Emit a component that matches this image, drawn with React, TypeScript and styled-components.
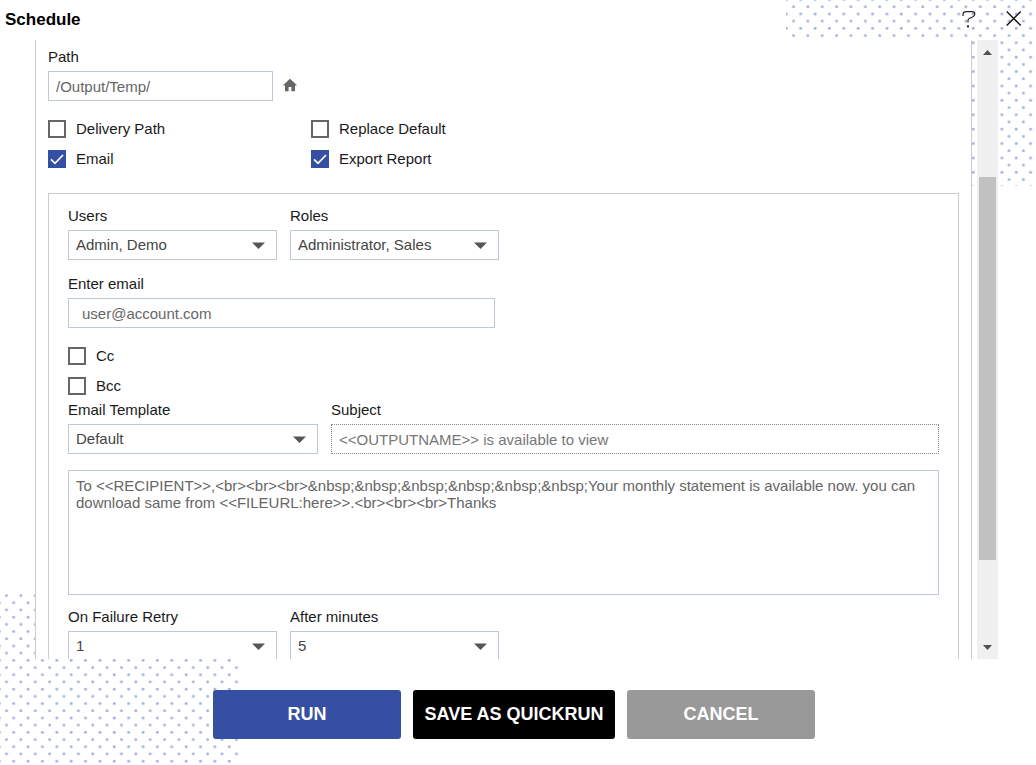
import React, { useId } from "react";
import styled, { createGlobalStyle } from "styled-components";

const GlobalStyle = createGlobalStyle`
  *, *::before, *::after { box-sizing: border-box; }
  body { margin: 0; background: #fff; }
  body, button, input, select, textarea {
    font-family: "Liberation Sans", Arial, Helvetica, sans-serif;
    font-size: 15px;
  }
`;

const Dialog = styled.div`
  position: relative;
  display: flex;
  flex-direction: column;
  height: 100vh;
  overflow: hidden;
  color: #1a1a1a;
`;

const Dots = styled.svg<{ $corner: "top" | "bottom" }>`
  position: absolute;
  z-index: -1;
  ${(p) => (p.$corner === "top" ? "top: 0; right: 0;" : "bottom: 0; left: 0;")}
`;

const Header = styled.header`
  display: flex;
  flex: none;
  align-items: center;
  justify-content: space-between;
  height: 40px;
  padding: 0 14px 0 5px;
`;

const Title = styled.h1`
  margin: 0;
  font-size: 17px;
  line-height: 20px;
  color: #000;
`;

const HeaderActions = styled.div`
  display: flex;
  gap: 28px;
`;

const IconButton = styled.button`
  display: flex;
  padding: 0;
  border: 0;
  background: none;
  cursor: pointer;
`;

const Body = styled.main`
  display: flex;
  flex: 1;
  gap: 5px;
  min-height: 0;
  padding: 0 38px 0 35px;
`;

const Panel = styled.div`
  flex: 1;
  min-width: 0;
  overflow: hidden;
  padding: 8px 12px 0;
  border: solid #ccc;
  border-width: 0 1px;
  background: #fff;
`;

const ScrollTrack = styled.div`
  display: flex;
  flex-direction: column;
  align-items: center;
  width: 21px;
  background: #f0f0f0;
`;

const ScrollArrow = styled(IconButton)`
  flex: none;
  align-items: center;
  justify-content: center;
  width: 21px;
  height: 24px;
`;

const ScrollSpace = styled.div<{ $grow: number }>`
  flex: ${(p) => p.$grow} 0 0;
`;

const ScrollThumb = styled(ScrollSpace)`
  width: 17px;
  background: #c1c1c1;
`;

const Row = styled.div<{ $top?: number }>`
  display: flex;
  align-items: flex-end;
  gap: 13px;
  margin-top: ${(p) => p.$top ?? 0}px;
`;

const Field = styled.div<{ $width?: number }>`
  display: flex;
  flex-direction: column;
  gap: 5px;
  min-width: 0;
  ${(p) => (p.$width ? `width: ${p.$width}px;` : "flex: 1;")}
`;

const Label = styled.label`
  line-height: 18px;
`;

const TextInput = styled.input<{ $indent?: number; $dotted?: boolean }>`
  width: 100%;
  height: 30px;
  padding: 1px 7px 0 ${(p) => p.$indent ?? 7}px;
  border: 1px ${(p) => (p.$dotted ? "dotted #888" : "solid #bfc8da")};
  background: #fff;
  color: ${(p) => (p.$dotted ? "#777" : "#666")};
  outline: 0;
`;

const HomeButton = styled(IconButton)`
  align-items: center;
  height: 30px;
  margin-left: -4px;
`;

const SelectFrame = styled.div`
  display: grid;
  align-items: center;
  > * { grid-area: 1 / 1; }
  > svg {
    justify-self: end;
    margin-right: 12px;
    pointer-events: none;
  }
`;

const SelectBox = styled.select`
  width: 100%;
  height: 30px;
  padding: 0 28px 2px 7px;
  border: 1px solid #bfc8da;
  border-radius: 0;
  background: #fff;
  color: #444;
  appearance: none;
`;

const Checks = styled.div<{ $columns?: boolean }>`
  display: grid;
  grid-template-columns: ${(p) => (p.$columns ? "263px 1fr" : "1fr")};
  grid-auto-rows: 30px;
  margin-top: 13px;
`;

const CheckLabel = styled.label`
  display: flex;
  align-items: center;
  gap: 10px;
  line-height: 18px;
`;

const CheckInput = styled.input`
  appearance: none;
  flex: none;
  width: 18px;
  height: 18px;
  margin: 0;
  border: 2px solid #666;
  background: #fff;
  &:checked {
    border: 0;
    background: #3550a2;
  }
`;

const CheckMark = styled.span`
  display: grid;
  > * { grid-area: 1 / 1; }
  > svg { pointer-events: none; }
  > input:not(:checked) + svg { visibility: hidden; }
`;

const EmailGroup = styled.section`
  margin-top: 19px;
  padding: 13px 19px 20px;
  border: 1px solid #ccc;
`;

const Message = styled.textarea`
  display: block;
  width: 100%;
  height: 125px;
  margin: 16px 0 13px;
  padding: 6px 7px;
  border: 1px solid #bfc8da;
  color: #666;
  line-height: 17px;
  resize: none;
  outline: 0;
`;

const Footer = styled.footer`
  display: flex;
  flex: none;
  justify-content: center;
  gap: 12px;
  padding: 31px 8px 26px 0;
`;

const ActionButton = styled.button<{ $tone: string; $wide?: boolean }>`
  width: ${(p) => (p.$wide ? 202 : 188)}px;
  height: 49px;
  padding: 0;
  border: 0;
  border-radius: 3px;
  background: ${(p) => p.$tone};
  color: #fff;
  font-size: 18px;
  font-weight: bold;
  white-space: nowrap;
  cursor: pointer;
`;

function DotField({ corner, width, height, x, y }: {
  corner: "top" | "bottom"; width: number; height: number; x: number; y: number;
}) {
  const id = useId();
  return (
    <Dots $corner={corner} width={width} height={height} aria-hidden="true">
      <defs>
        <pattern id={id} x={x} y={y} width="14.37" height="14.4" patternUnits="userSpaceOnUse">
          <g fill="#a3b1de">
            <circle cx="3.6" cy="3.6" r="1.45" />
            <circle cx="10.8" cy="10.8" r="1.45" />
          </g>
        </pattern>
      </defs>
      <rect width={width} height={height} fill={`url(#${id})`} />
    </Dots>
  );
}

function Select({ label, value, width }: { label: string; value: string; width: number }) {
  const id = useId();
  return (
    <Field $width={width}>
      <Label htmlFor={id}>{label}</Label>
      <SelectFrame>
        <SelectBox id={id} defaultValue={value}>
          <option>{value}</option>
        </SelectBox>
        <svg width="13" height="7" viewBox="0 0 13 7" aria-hidden="true">
          <path d="M0 .5h13L6.5 7z" fill="#555" />
        </svg>
      </SelectFrame>
    </Field>
  );
}

function Check({ label, checked = false }: { label: string; checked?: boolean }) {
  return (
    <CheckLabel>
      <CheckMark>
        <CheckInput type="checkbox" defaultChecked={checked} />
        <svg width="18" height="18" viewBox="0 0 18 18" aria-hidden="true">
          <path d="M3 9.3l4 4L15 5" fill="none" stroke="#fff" strokeWidth="1.7" />
        </svg>
      </CheckMark>
      {label}
    </CheckLabel>
  );
}

const message =
  "To <<RECIPIENT>>,<br><br><br>&nbsp;&nbsp;&nbsp;&nbsp;&nbsp;&nbsp;Your monthly statement is available now. you can download same from <<FILEURL:here>>.<br><br><br>Thanks";

export default function App() {
  return (
    <Dialog>
      <GlobalStyle />
      <DotField corner="top" width={250} height={186} x={3.9} y={3.1} />
      <DotField corner="bottom" width={240} height={171} x={2.9} y={-2.1} />
      <Header>
        <Title>Schedule</Title>
        <HeaderActions>
          <IconButton aria-label="Help">
            <svg width="16" height="18" viewBox="0 0 16 18" fill="none" stroke="#222" strokeWidth="1.2">
              <path d="M1 5V3.4Q1.2.6 4 .6h6q2.8 0 2.8 2.4 0 2.2-2.6 3.2L7.6 7.3Q6 8 6 9.6V11.5" />
              <circle cx="6" cy="15.4" r="1.1" fill="#111" stroke="none" />
            </svg>
          </IconButton>
          <IconButton aria-label="Close">
            <svg width="16" height="18" viewBox="0 0 16 18" stroke="#111" strokeWidth="1.4">
              <path d="M.7.5l14 14M14.7.5l-14 14" />
            </svg>
          </IconButton>
        </HeaderActions>
      </Header>
      <Body>
        <Panel>
          <Row>
            <Field $width={225}>
              <Label htmlFor="path">Path</Label>
              <TextInput id="path" defaultValue="/Output/Temp/" />
            </Field>
            <HomeButton aria-label="Home folder">
              <svg width="16" height="16" viewBox="0 0 16 16">
                <path d="M8 .8l7.2 6.7H13V13.200H9.400V9H6.600v4.200H3V7.500H.8z" fill="#666" />
              </svg>
            </HomeButton>
          </Row>
          <Checks $columns>
            <Check label="Delivery Path" />
            <Check label="Replace Default" />
            <Check label="Email" checked />
            <Check label="Export Report" checked />
          </Checks>
          <EmailGroup>
            <Row>
              <Select label="Users" value="Admin, Demo" width={209} />
              <Select label="Roles" value="Administrator, Sales" width={209} />
            </Row>
            <Row $top={15}>
              <Field $width={427}>
                <Label htmlFor="email">Enter email</Label>
                <TextInput id="email" type="email" defaultValue="user@account.com" $indent={13} />
              </Field>
            </Row>
            <Checks>
              <Check label="Cc" />
              <Check label="Bcc" />
            </Checks>
            <Row>
              <Select label="Email Template" value="Default" width={250} />
              <Field>
                <Label htmlFor="subject">Subject</Label>
                <TextInput id="subject" defaultValue="<<OUTPUTNAME>> is available to view" readOnly $dotted />
              </Field>
            </Row>
            <Message aria-label="Message" defaultValue={message} spellCheck={false} />
            <Row>
              <Select label="On Failure Retry" value="1" width={209} />
              <Select label="After minutes" value="5" width={209} />
            </Row>
          </EmailGroup>
        </Panel>
        <ScrollTrack>
          <ScrollArrow aria-label="Scroll up">
            <svg width="9" height="5" viewBox="0 0 9 5"><path d="M4.5 0L9 5H0z" fill="#505050" /></svg>
          </ScrollArrow>
          <ScrollSpace $grow={113} />
          <ScrollThumb $grow={383} />
          <ScrollSpace $grow={75} />
          <ScrollArrow aria-label="Scroll down">
            <svg width="9" height="5" viewBox="0 0 9 5"><path d="M0 0h9L4.5 5z" fill="#505050" /></svg>
          </ScrollArrow>
        </ScrollTrack>
      </Body>
      <Footer>
        <ActionButton $tone="#3550a2">RUN</ActionButton>
        <ActionButton $tone="#000" $wide>SAVE AS QUICKRUN</ActionButton>
        <ActionButton $tone="#999">CANCEL</ActionButton>
      </Footer>
    </Dialog>
  );
}
